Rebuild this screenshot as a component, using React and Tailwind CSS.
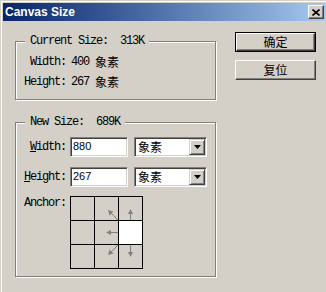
import React from "react";

const mono =
  "font-['Liberation_Mono','Noto_Sans_CJK_SC',monospace] text-[12px] leading-[14px] tracking-[-1.2px] text-black";
const cjk = "font-['Noto_Sans_CJK_SC',sans-serif] tracking-normal";

/** Etched group box, the way Windows classic draws it */
const GroupBox = ({ title, className, children }) => (
  <fieldset
    className={`border border-[#808080] shadow-[inset_1px_1px_0_#fff,1px_1px_0_#fff] ${className}`}
  >
    <legend className={`${mono} ml-[9px] px-[5px] bg-[#d4d0c8] whitespace-pre`}>
      {title}
    </legend>
    {children}
  </fieldset>
);

const Sunken = ({ className, children }) => (
  <div
    className={`border border-t-[#808080] border-l-[#808080] border-b-white border-r-white shadow-[inset_1px_1px_0_#404040,inset_-1px_-1px_0_#d4d0c8] bg-white ${className}`}
  >
    {children}
  </div>
);

const Select = () => (
  <Sunken className="w-[73px] h-[20px] flex items-stretch p-[1px]">
    <div className="flex-1 flex items-center pl-[2px] text-[12px] leading-none text-black">
      <span className={cjk}>象素</span>
    </div>
    <div className="w-[16px] bg-[#d4d0c8] border border-t-[#d4d0c8] border-l-[#d4d0c8] border-r-[#404040] border-b-[#404040] shadow-[inset_1px_1px_0_#fff,inset_-1px_-1px_0_#808080] flex items-center justify-center">
      <svg width="7" height="4" viewBox="0 0 7 4">
        <polygon points="0,0 7,0 3.5,4" fill="#000" />
      </svg>
    </div>
  </Sunken>
);

const Field = ({ value }) => (
  <Sunken className="w-[58px] h-[20px] flex items-start pl-[2px] pt-[2px]">
    <span className="font-['Liberation_Sans',Arial,sans-serif] text-[11px] leading-[12px] text-black">
      {value}
    </span>
  </Sunken>
);

/** Small gray arrows around the selected anchor cell */
const Arrow = ({ dir }) => {
  const lines = {
    up: { d: "M11.5 16V23", head: "11.5,12 9,17 14,17" },
    left: { d: "M16 11.5H23", head: "11,11.5 16,9 16,14" },
    down: { d: "M11.5 0V8", head: "11.5,12 9,7 14,7" },
    upLeft: { d: "M23 23L16 16", head: "13,13 18.5,14.5 14.5,18.5" },
    downLeft: { d: "M23 0L16 7", head: "13,10 14.5,4.5 18.5,8.5" },
  };
  const a = lines[dir];
  return (
    <svg width="23" height="23" viewBox="0 0 23 23">
      <path d={a.d} stroke="#808080" strokeWidth="1" fill="none" />
      <polygon points={a.head} fill="#808080" />
    </svg>
  );
};

const anchorCells = [null, "upLeft", "up", null, "left", "sel", null, "downLeft", "down"];

const Button = ({ label, isDefault }) => (
  <div className={`h-[20px] ${isDefault ? "border border-black" : ""}`}>
    <div className="h-full bg-[#d4d0c8] border border-t-white border-l-white border-r-[#404040] border-b-[#404040] shadow-[inset_-1px_-1px_0_#808080] flex items-center justify-center">
      <span className={`${cjk} text-[12px] leading-none text-black`}>{label}</span>
    </div>
  </div>
);

const App = () => {
  return (
    <div className="w-[326px] h-[292px] overflow-hidden bg-[#d4d0c8] pt-[3px] pl-[3px] shadow-[inset_1px_1px_0_#d4d0c8,inset_2px_2px_0_#fff]">
      {/* Title bar */}
      <div className="h-[18px] flex items-center justify-between pl-[2px] pr-[2px] bg-gradient-to-r from-[#0a246a] to-[#a6caf0]">
        <span className="font-['Liberation_Sans',Arial,sans-serif] font-bold text-[12px] leading-none text-white">
          Canvas Size
        </span>
        <div className="w-[16px] h-[14px] bg-[#d4d0c8] border border-t-white border-l-white border-r-[#404040] border-b-[#404040] shadow-[inset_-1px_-1px_0_#808080] flex items-center justify-center">
          <svg width="8" height="7" viewBox="0 0 8 7">
            <path d="M0.5 0.5L7.5 6.5M7.5 0.5L0.5 6.5" stroke="#000" strokeWidth="1.6" />
          </svg>
        </div>
      </div>

      {/* Body */}
      <div className="flex items-start pl-[12px] pt-[11px]">
        <div className="w-[201px] mt-[2px]">
          <GroupBox title="Current Size:  313K" className="pt-[4px] pb-[7px]">
            <div className="grid grid-cols-[50px_1fr] gap-x-[5px]">
              <span className={`${mono} h-[20px] flex items-center justify-end`}>Width:</span>
              <span className={`${mono} h-[20px] flex items-center whitespace-pre`}>
                400 <span className={cjk}>象素</span>
              </span>
              <span className={`${mono} h-[20px] flex items-center justify-end`}>Height:</span>
              <span className={`${mono} h-[20px] flex items-center whitespace-pre`}>
                267 <span className={cjk}>象素</span>
              </span>
            </div>
          </GroupBox>

          <GroupBox title="New Size:  689K" className="mt-[15px] pt-[8px] pb-[7px]">
            <div className="grid grid-cols-[50px_auto_auto_1fr] gap-x-[4px] gap-y-[10px] items-center">
              <span className={`${mono} text-right`}>
                <span className="underline underline-offset-[1px]">W</span>idth:
              </span>
              <Field value="880" />
              <div className="ml-[2px]">
                <Select />
              </div>
              <span />

              <span className={`${mono} text-right`}>
                <span className="underline underline-offset-[1px]">H</span>eight:
              </span>
              <Field value="267" />
              <div className="ml-[2px]">
                <Select />
              </div>
              <span />

              <span className={`${mono} text-right self-start mt-[-1px]`}>Anchor:</span>
              <div className="col-span-3 -mt-[1px]">
                <div className="grid grid-cols-[repeat(3,23px)] grid-rows-[repeat(3,23px)] gap-px bg-black border border-black w-fit">
                  {anchorCells.map((c, i) => (
                    <div
                      key={i}
                      className={c === "sel" ? "bg-white" : "bg-[#d4d0c8]"}
                    >
                      {c && c !== "sel" && <Arrow dir={c} />}
                    </div>
                  ))}
                </div>
              </div>
            </div>
          </GroupBox>
        </div>

        {/* Buttons */}
        <div className="w-[81px] ml-[19px] flex flex-col gap-[8px]">
          <Button label="确定" isDefault />
          <Button label="复位" />
        </div>
      </div>
    </div>
  );
};

export default App;
